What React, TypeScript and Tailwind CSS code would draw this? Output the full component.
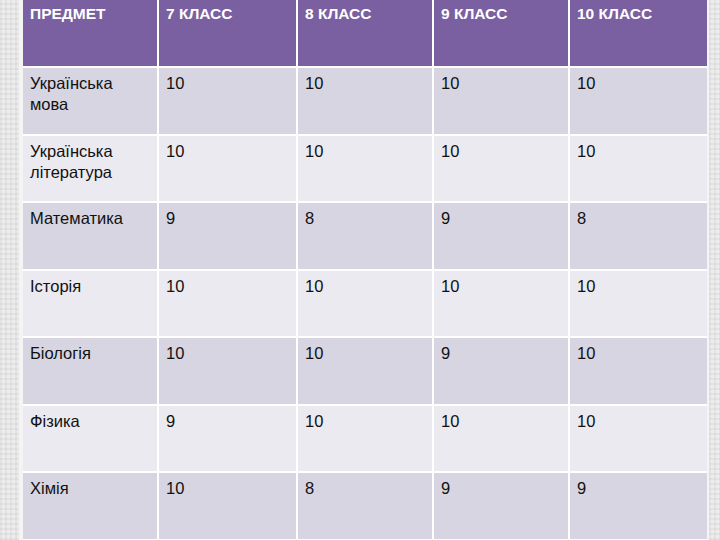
const headers = ['ПРЕДМЕТ', '7 КЛАСС', '8 КЛАСС', '9 КЛАСС', '10 КЛАСС'];

const rows: string[][] = [
  ['Українська мова', '10', '10', '10', '10'],
  ['Українська література', '10', '10', '10', '10'],
  ['Математика', '9', '8', '9', '8'],
  ['Історія', '10', '10', '10', '10'],
  ['Біологія', '10', '10', '9', '10'],
  ['Фізика', '9', '10', '10', '10'],
  ['Хімія', '10', '8', '9', '9'],
];

const strip =
  'bg-[#ececec] bg-[repeating-linear-gradient(0deg,rgba(0,0,0,0.04)_0px,rgba(0,0,0,0.04)_2px,transparent_2px,transparent_5px),repeating-linear-gradient(90deg,rgba(0,0,0,0.04)_0px,rgba(0,0,0,0.04)_2px,transparent_2px,transparent_5px)]';

export default function App() {
  return (
    <div className="w-[720px] h-[540px] overflow-hidden flex bg-white font-['Liberation_Sans',Arial,sans-serif]">
      <div className={`w-[19px] shrink-0 ${strip}`} />
      <div className="w-[4px] shrink-0 bg-[#f4f4f4]" />
      <div className="grid grid-cols-[134px_137px_134px_134px_137px] grid-rows-[66px_repeat(7,65.5px)] gap-[2px] bg-white shrink-0">
        {headers.map((h) => (
          <div key={h} className="bg-[#7b60a1] text-white font-bold text-[15.5px] leading-[18px] pt-[5px] px-[7px]">
            {h}
          </div>
        ))}
        {rows.map((row, i) =>
          row.map((cell, j) => (
            <div
              key={`${i}-${j}`}
              className={`${i % 2 === 0 ? 'bg-[#d6d5e1]' : 'bg-[#ebeaf0]'} text-[#111] text-[16.5px] leading-[21px] pt-[5px] px-[7px]`}
            >
              {cell}
            </div>
          ))
        )}
      </div>
      <div className="w-[2px] shrink-0 bg-[#f4f4f4]" />
      <div className={`flex-1 ${strip}`} />
    </div>
  );
}
